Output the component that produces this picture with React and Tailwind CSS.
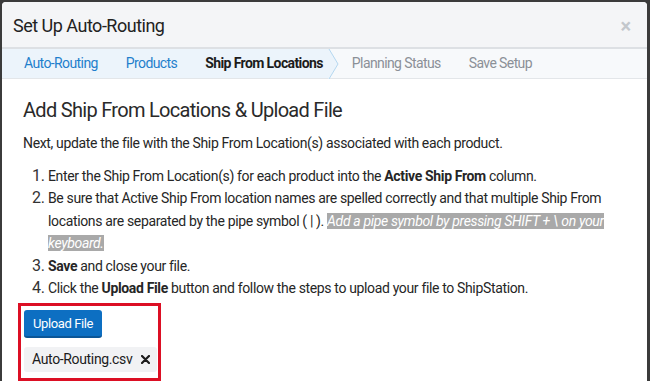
import React from 'react';

const steps = [
  { label: 'Auto-Routing', state: 'done' },
  { label: 'Products', state: 'done' },
  { label: 'Ship From Locations', state: 'active' },
  { label: 'Planning Status', state: 'todo' },
  { label: 'Save Setup', state: 'todo' },
];

const Item = ({ n, children }) => (
  <li className="flex">
    <span className="w-[16px] shrink-0 text-[16px] text-[#333] tracking-[-0.3px]">{n}.</span>
    <span>{children}</span>
  </li>
);

const App = () => {
  return (
    <div className="w-[650px] h-[381px] overflow-hidden bg-[#3b3b3b] pt-[2px] pl-[2px] pr-[3px]" style={{ fontFamily: 'Roboto, "Liberation Sans", sans-serif' }}>
      <div className="h-full bg-white rounded-t-[4px] overflow-hidden">
        {/* header */}
        <div className="h-[47px] bg-[#f4f5f7] flex items-center justify-between pl-[11px] pr-[16px] border-b-[2px] border-[#dde0e4]">
          <h1 className="text-[18px] text-[#222] tracking-[-0.5px] pt-[2px]">Set Up Auto-Routing</h1>
          <span className="text-[#c3c7cc] text-[20px] leading-none font-bold pt-[2px]">×</span>
        </div>

        {/* steps */}
        <div className="h-[30px] bg-[#f7f9fb] border-b border-[#e3e6e9] flex items-stretch text-[14px] tracking-[-0.6px]">
          <div className="flex items-center bg-[#ecf4fb] pl-[22px]">
            {steps.slice(0, 3).map((s) => (
              <span
                key={s.label}
                className={s.state === 'active' ? 'font-bold text-[#1c1c1c] mr-[6px]' : 'text-[#1f7fcc] mr-[28px]'}
              >
                {s.label}
              </span>
            ))}
          </div>
          <svg width="14" height="30" viewBox="0 0 14 30" className="-ml-[1px]">
            <path d="M0 0 L0 30 L1 30 L10 15 L1 0 Z" fill="#ecf4fb" />
            <path d="M1 0 L10 15 L1 30" fill="none" stroke="#b5d8f1" strokeWidth="1" />
          </svg>
          <div className="flex items-center pl-[10px] text-[#8b9097]">
            <span className="mr-[28px]">Planning Status</span>
            <span>Save Setup</span>
          </div>
        </div>

        {/* body */}
        <div className="pl-[21px] pr-[20px] pt-[19px] text-[#262626]">
          <h2 className="text-[20px] leading-[24px] text-[#2a2a2a] tracking-[-0.7px]">Add Ship From Locations &amp; Upload File</h2>
          <p className="mt-[10px] text-[14px] leading-[22px] tracking-[-0.35px]">
            Next, update the file with the Ship From Location(s) associated with each product.
          </p>
          <ol className="mt-[11px] text-[14px] leading-[22.4px] tracking-[-0.35px] pl-[9px]">
            <Item n={1}>
              Enter the Ship From Location(s) for each product into the <b>Active Ship From</b> column.
            </Item>
            <Item n={2}>
              Be sure that Active Ship From location names are spelled correctly and that multiple Ship From locations are separated by the pipe symbol ( | ).{' '}
              <span className="bg-[#a9a9a9] text-white italic">Add a pipe symbol by pressing SHIFT + \ on your keyboard.</span>
            </Item>
            <Item n={3}>
              <b>Save</b> and close your file.
            </Item>
            <Item n={4}>
              Click the <b>Upload File</b> button and follow the steps to upload your file to ShipStation.
            </Item>
          </ol>

          <div className="mt-[4px] -ml-[5px] w-fit border-[3px] border-[#dc0f24] pt-[4px] pl-[3px] pr-[1px] pb-[6px] flex flex-col items-start gap-[9px]">
            <button className="h-[28px] px-[9px] rounded-[3px] bg-[#0d6fc2] border-b-[2px] border-[#0b5697] text-white text-[13px] tracking-[-0.4px]">
              Upload File
            </button>
            <div className="h-[25px] flex items-center gap-[9px] bg-[#f1f2f4] rounded-[3px] pl-[8px] pr-[7px] text-[14px] tracking-[-0.35px] text-[#1c1c1c] whitespace-nowrap">
              <span>Auto-Routing.csv</span>
              <svg width="9" height="9" viewBox="0 0 9 9">
                <path d="M1 1 L8 8 M8 1 L1 8" stroke="#1c1c1c" strokeWidth="2.2" strokeLinecap="round" />
              </svg>
            </div>
          </div>
        </div>
      </div>
    </div>
  );
};

export default App;
